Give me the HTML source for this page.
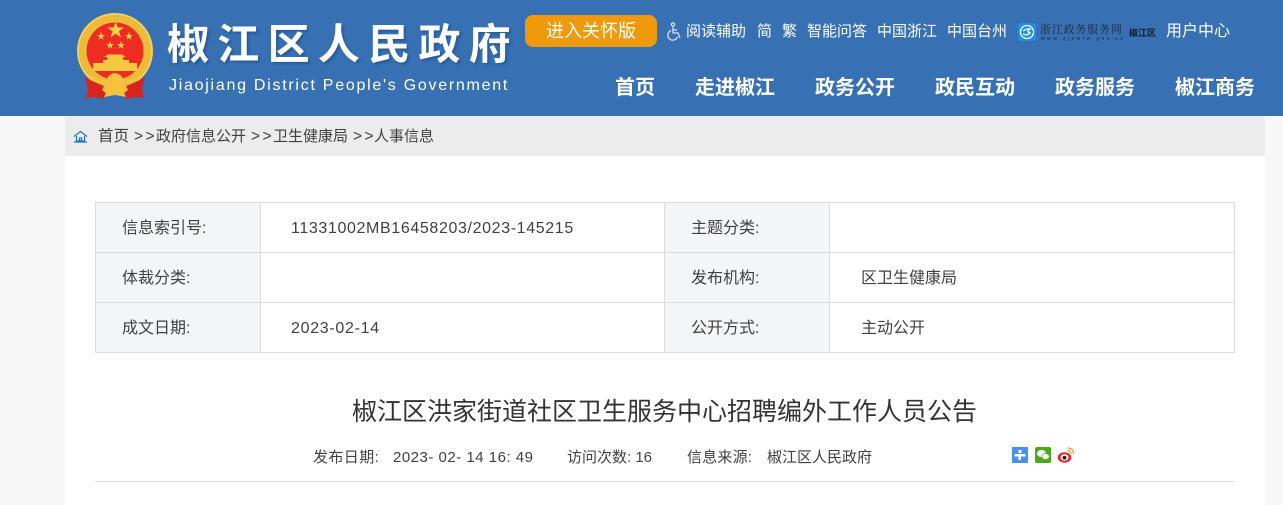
<!DOCTYPE html>
<html lang="zh-CN"><head><meta charset="utf-8"><title>椒江区人民政府</title>
<style>
*{margin:0;padding:0;box-sizing:border-box}
html,body{width:1283px;height:505px;overflow:hidden;background:#f7f7f7}
body{position:relative;font-family:"Liberation Sans","Noto Sans CJK SC",sans-serif;color:#333}
div,span.a{position:absolute;white-space:nowrap}
#hd{left:0;top:0;width:1283px;height:116px;background:#3771b3}
.t{color:#fff;font-size:15px;line-height:20px;top:22px}
.n{color:#fff;font-size:20px;font-weight:bold;line-height:28px;top:74px}
.c{font-size:15.500px;line-height:20px;color:#404040}
.l{font-size:16px;line-height:20px;color:#404040}
.b{background:#dcdcdc}
.m{font-size:15px;line-height:20px;color:#404040;top:448px}
.g{letter-spacing:2.400px}
</style></head><body>
<div id="hd"></div>
<svg style="position:absolute;left:76px;top:11px" width="80" height="90" viewBox="0 0 80 90">
<circle cx="39" cy="40" r="38" fill="#edbb3a"/>
<circle cx="39" cy="40" r="37" fill="none" stroke="#f6d264" stroke-width="1.500"/>
<circle cx="39" cy="40" r="28.500" fill="#ee2c23"/>
<path d="M9 66 L14 69 L30 76 L28 88 L20 86 L10 87 L12 78 Z M69 66 L64 69 L48 76 L50 88 L58 86 L68 87 L66 78 Z" fill="#d9241d"/>
<path d="M27 49 L31 49 L31 46 L28 46 L32 43.500 L46 43.500 L50 46 L47 46 L47 49 L53 49 L53 52 L61 52 L61 60 L17 60 L17 52 L27 52 Z" fill="#f7c73f"/>
<path d="M14 64 Q24 70 30 69 Q34 62 39 62 Q44 62 48 69 Q54 70 64 64 L66 67 Q56 74 49 73 L52 79 L48 82 L50 86 L39 84 L28 86 L30 82 L26 79 L29 73 Q22 74 12 67 Z" fill="#f4c23d"/>
<g fill="#f8cf46">
<path d="M39.700 10.500 L41.800 16.500 L48 16.500 L43 20.300 L44.900 26.500 L39.700 22.700 L34.500 26.500 L36.400 20.300 L31.400 16.500 L37.600 16.500 Z"/>
<path d="M25 21 L26 24 L29 24 L26.600 25.800 L27.500 28.800 L25 27 L22.500 28.800 L23.400 25.800 L21 24 L24 24 Z"/>
<path d="M53 21 L54 24 L57 24 L54.600 25.800 L55.500 28.800 L53 27 L50.500 28.800 L51.400 25.800 L49 24 L52 24 Z"/>
<path d="M34 30 L35 33 L38 33 L35.600 34.800 L36.500 37.800 L34 36 L31.500 37.800 L32.400 34.800 L30 33 L33 33 Z"/>
<path d="M45 30 L46 33 L49 33 L46.600 34.800 L47.500 37.800 L45 36 L42.500 37.800 L43.400 34.800 L41 33 L44 33 Z"/>
</g></svg>
<div style="left:167px;top:15px;color:#fff;font-size:42px;font-weight:bold;line-height:60px;letter-spacing:8.300px;text-shadow:2px 2px 2px #2a5a96">椒江区人民政府</div>
<div style="left:169px;top:76px;color:#fff;font-size:16px;line-height:20px;letter-spacing:1.730px">Jiaojiang District People's Government</div>
<div style="left:525px;top:15px;width:132px;height:32px;background:#ef990c;border-radius:8px;color:#fff;font-size:18px;line-height:33px;text-align:center">进入关怀版</div>
<svg style="position:absolute;left:666px;top:22px" width="16" height="20" viewBox="0 0 16 20" fill="none" stroke="#d5e0ee" stroke-width="1.300"><circle cx="7" cy="2.500" r="1.600"/><path d="M7 5V11H12L14 16"/><path d="M7 8H11"/><path d="M5 8.500A5 5 0 1 0 11.500 15"/></svg>
<div class="t" style="left:686px">阅读辅助</div>
<div class="t" style="left:757px">简</div>
<div class="t" style="left:782px">繁</div>
<div class="t" style="left:807px">智能问答</div>
<div class="t" style="left:877px">中国浙江</div>
<div class="t" style="left:947px">中国台州</div>
<svg style="position:absolute;left:1018px;top:23px" width="18" height="18" viewBox="0 0 18 18"><rect width="18" height="18" rx="3" fill="#1e90f0"/><circle cx="9" cy="9" r="6.500" fill="none" stroke="#fff" stroke-width="1.300"/><path d="M5 8 Q10 5 12 6 Q8 8 12 10 Q9 13 5 11" fill="none" stroke="#fff" stroke-width="1.300"/></svg>
<div style="left:1040px;top:23px;font-family:'Noto Serif CJK SC','Liberation Serif',serif;font-size:11px;line-height:13px;color:#1f2638;letter-spacing:.8px">浙江政务服务网</div>
<div style="left:1041px;top:36px;font-size:5px;line-height:6px;color:#1f2638;letter-spacing:2.500px">www.zjzwfw.gov.cn</div>
<div style="left:1129px;top:26px;font-size:9px;line-height:14px;color:#0d1b2e;font-weight:bold">椒江区</div>
<div class="t" style="left:1166px;font-size:16px">用户中心</div>
<div class="n" style="left:615px">首页</div>
<div class="n" style="left:695px">走进椒江</div>
<div class="n" style="left:815px">政务公开</div>
<div class="n" style="left:935px">政民互动</div>
<div class="n" style="left:1055px">政务服务</div>
<div class="n" style="left:1175px">椒江商务</div>

<div style="left:65px;top:116px;width:1200px;height:389px;background:#fff"></div>
<div style="left:65px;top:116px;width:1200px;height:40px;background:#ececec"></div>
<svg style="position:absolute;left:73px;top:130px" width="15" height="13" viewBox="0 0 15 13" fill="none" stroke="#1f74c4" stroke-width="1.200"><path d="M1 6.500L7.500 1.500L14 6.500"/><path d="M3.500 6V11H11.500V6"/><path d="M6.500 11V8H8.500V11"/><path d="M1 12H14"/></svg>
<div class="c" style="left:98px;top:127px">首页</div>
<div class="c" style="left:134px;top:127px"><span class="g">&gt;&gt;</span></div>
<div class="c" style="left:156px;top:127px;font-size:15px">政府信息公开</div>
<div class="c" style="left:251px;top:127px"><span class="g">&gt;&gt;</span></div>
<div class="c" style="left:273px;top:127px;font-size:15px">卫生健康局</div>
<div class="c" style="left:353px;top:127px"><span class="g">&gt;&gt;</span></div>
<div class="c" style="left:374px;top:127px;font-size:15px">人事信息</div>

<div style="left:96px;top:203px;width:164px;height:149px;background:#f4f5f7"></div>
<div style="left:665px;top:203px;width:164px;height:149px;background:#f4f5f7"></div>
<div class="b" style="left:95px;top:202px;width:1140px;height:1px"></div>
<div class="b" style="left:95px;top:252px;width:1140px;height:1px"></div>
<div class="b" style="left:95px;top:302px;width:1140px;height:1px"></div>
<div class="b" style="left:95px;top:352px;width:1140px;height:1px"></div>
<div class="b" style="left:95px;top:202px;width:1px;height:151px"></div>
<div class="b" style="left:260px;top:202px;width:1px;height:151px"></div>
<div class="b" style="left:664px;top:202px;width:1px;height:151px"></div>
<div class="b" style="left:829px;top:202px;width:1px;height:151px"></div>
<div class="b" style="left:1234px;top:202px;width:1px;height:151px"></div>

<div class="l" style="left:122px;top:219px">信息索引号:</div>
<div class="l" style="left:291px;top:219px;letter-spacing:.63px">11331002MB16458203/2023-145215</div>
<div class="l" style="left:691px;top:219px">主题分类:</div>
<div class="l" style="left:122px;top:269px">体裁分类:</div>
<div class="l" style="left:691px;top:269px">发布机构:</div>
<div class="l" style="left:861px;top:269px">区卫生健康局</div>
<div class="l" style="left:122px;top:319px">成文日期:</div>
<div class="l" style="left:291px;top:319px;letter-spacing:.7px">2023-02-14</div>
<div class="l" style="left:691px;top:319px">公开方式:</div>
<div class="l" style="left:861px;top:319px">主动公开</div>

<div style="left:352px;top:394px;font-size:25px;line-height:36px;color:#333">椒江区洪家街道社区卫生服务中心招聘编外工作人员公告</div>
<div class="m" style="left:313px;letter-spacing:.4px">发布日期:</div>
<div class="m" style="left:393px;letter-spacing:.5px">2023- 02- 14 16: 49</div>
<div class="m" style="left:567px">访问次数: 16</div>
<div class="m" style="left:687px;letter-spacing:.2px">信息来源:</div>
<div class="m" style="left:767px">椒江区人民政府</div>

<svg style="position:absolute;left:1012px;top:447px" width="16" height="16" viewBox="0 0 16 16"><rect width="16" height="16" fill="#4a90e8"/><path d="M6.500 3H9.500V6H6.500Z M2.500 7H13.500V9.500H2.500Z M6.500 9.500H9V13H6.500Z" fill="#fff"/></svg>
<svg style="position:absolute;left:1035px;top:447px" width="16" height="16" viewBox="0 0 16 16"><rect width="16" height="16" rx="2" fill="#4ca81c"/><ellipse cx="6.500" cy="6.500" rx="4.500" ry="3.500" fill="#fff"/><ellipse cx="10.500" cy="9.500" rx="3.800" ry="3" fill="#fff" stroke="#4ca81c" stroke-width=".7"/></svg>
<svg style="position:absolute;left:1057px;top:446px" width="18" height="18" viewBox="0 0 18 18"><ellipse cx="7.500" cy="11.500" rx="6.800" ry="5.200" fill="#e6262e"/><ellipse cx="7.500" cy="11.500" rx="4" ry="3.200" fill="#fff"/><circle cx="7.500" cy="11.700" r="1.900" fill="#222"/><path d="M10.500 2Q16.500 2 16.500 8M10.500 4.500Q14 4.500 14 8" fill="none" stroke="#f0a020" stroke-width="1.300"/></svg>
<div class="b" style="left:95px;top:481px;width:1140px;height:1px"></div>
</body></html>
